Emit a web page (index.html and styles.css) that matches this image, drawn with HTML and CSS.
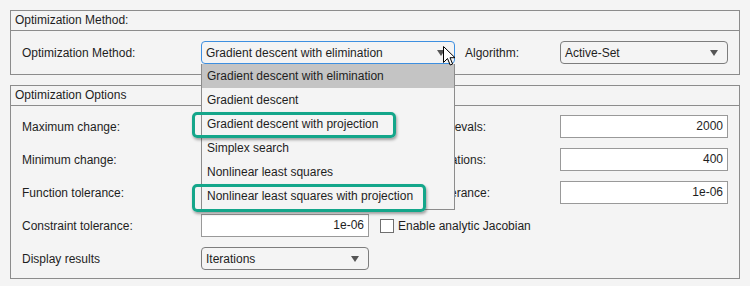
FILE: index.html
```html
<!DOCTYPE html>
<html>
<head>
<meta charset="utf-8">
<link rel="stylesheet" href="styles.css">
</head>
<body>
<div class="app">
  <div class="panel">
    <div class="panel-title">Optimization Method:</div>
    <div class="panel-body">
      <div class="row">
        <div class="label">Optimization Method:</div>
        <div class="dd-wrap wide">
          <div class="dropdown focused">
            <span class="dd-text">Gradient descent with elimination</span>
            <span class="caret"></span>
          </div>
          <div class="popup">
            <div class="item selected">Gradient descent with elimination</div>
            <div class="item">Gradient descent</div>
            <div class="item">Gradient descent with projection</div>
            <div class="item">Simplex search</div>
            <div class="item">Nonlinear least squares</div>
            <div class="item">Nonlinear least squares with projection</div>
            <div class="mark mark-a"></div>
            <div class="mark mark-b"></div>
          </div>
          <svg class="cursor" width="13" height="21" viewBox="0 0 13 21">
            <path d="M0.5 0.5 L0.5 16.5 L4.5 12.5 L7.2 19 L9.6 18 L7 11.7 L12 11.7 Z" fill="#fff" stroke="#000" stroke-width="1" stroke-linejoin="miter"/>
          </svg>
        </div>
        <div class="label alg">Algorithm:</div>
        <div class="dropdown narrow">
          <span class="dd-text">Active-Set</span>
          <span class="caret"></span>
        </div>
      </div>
    </div>
  </div>

  <div class="panel second">
    <div class="panel-title">Optimization Options</div>
    <div class="panel-body rows">
      <div class="row">
        <div class="label">Maximum change:</div>
        <div class="input"></div>
        <div class="label rlabel">evals:</div>
        <div class="input">2000</div>
      </div>
      <div class="row">
        <div class="label">Minimum change:</div>
        <div class="input"></div>
        <div class="label rlabel">ations:</div>
        <div class="input">400</div>
      </div>
      <div class="row">
        <div class="label">Function tolerance:</div>
        <div class="input"></div>
        <div class="label rlabel rlabel-wide">erance:</div>
        <div class="input">1e-06</div>
      </div>
      <div class="row">
        <div class="label">Constraint tolerance:</div>
        <div class="input">1e-06</div>
        <div class="check"></div>
        <div class="check-label">Enable analytic Jacobian</div>
      </div>
      <div class="row">
        <div class="label">Display results</div>
        <div class="dropdown narrow">
          <span class="dd-text">Iterations</span>
          <span class="caret"></span>
        </div>
      </div>
    </div>
  </div>
</div>
</body>
</html>
```

FILE: styles.css
```css
* { box-sizing: border-box; }
html, body {
  margin: 0;
  padding: 0;
  background: #f4f4f4;
}
body {
  font-family: "Liberation Sans", Arial, sans-serif;
  font-size: 12px;
  color: #1e1e1e;
  width: 750px;
  height: 286px;
  overflow: hidden;
}
.app {
  padding: 10px 0 0 10px;
  display: flex;
  flex-direction: column;
  gap: 10px;
}
.panel {
  width: 730px;
  border: 1px solid #8c8c8c;
}
.panel-title {
  height: 20px;
  line-height: 19px;
  padding-left: 4px;
  border-bottom: 1px solid #8c8c8c;
}
.panel-body {
  padding: 10px 0 10px 11px;
}
.rows {
  padding: 9px 0 8px 11px;
  display: flex;
  flex-direction: column;
  gap: 10px;
}
.row {
  display: flex;
  align-items: center;
  height: 23px;
}
.label {
  width: 179px;
  white-space: nowrap;
}
.rlabel {
  width: 191px;
  text-align: right;
  padding-right: 74px;
}
.rlabel-wide {
  padding-right: 70px;
}
.alg {
  width: 95px;
  margin-left: 10px;
}
.dd-wrap {
  position: relative;
  z-index: 5;
}
.dropdown {
  position: relative;
  height: 23px;
  border: 1px solid #7d7d7d;
  border-radius: 4px;
  background: #f4f4f4;
  display: flex;
  align-items: center;
  padding-left: 4px;
}
.dropdown.focused {
  border-color: #3d8fe0;
}
.wide, .wide .dropdown { width: 254px; }
.narrow { width: 168px; }
.dd-text { flex: 1; white-space: nowrap; }
.caret {
  width: 0;
  height: 0;
  border-left: 4px solid transparent;
  border-right: 4px solid transparent;
  border-top: 6px solid #555;
  margin-right: 9px;
}
.input {
  width: 168px;
  height: 23px;
  border: 1px solid #999;
  background: #fff;
  text-align: right;
  padding-right: 4px;
  line-height: 21px;
}
.check {
  width: 14px;
  height: 14px;
  border: 1px solid #6f6f6f;
  background: #fff;
  margin-left: 11px;
}
.check-label {
  margin-left: 4px;
  white-space: nowrap;
}
.popup {
  position: absolute;
  left: 0;
  top: 23px;
  width: 254px;
  background: #f4f4f4;
  border: 1px solid #8c8c8c;
  border-top: none;
  padding-bottom: 1px;
}
.item {
  height: 24px;
  line-height: 24px;
  padding-left: 5px;
  white-space: nowrap;
}
.item.selected {
  background: #c4c4c4;
}
.mark {
  position: absolute;
  left: -10px;
  border: 3px solid #14a68a;
  border-radius: 5px;
  box-shadow: 1px 2px 3px rgba(0, 0, 0, 0.35);
}
.mark-a {
  top: 48px;
  width: 204px;
  height: 26px;
}
.mark-b {
  top: 120px;
  width: 234px;
  height: 28px;
}
.cursor {
  position: absolute;
  left: 242px;
  top: 5px;
  z-index: 10;
}
```
